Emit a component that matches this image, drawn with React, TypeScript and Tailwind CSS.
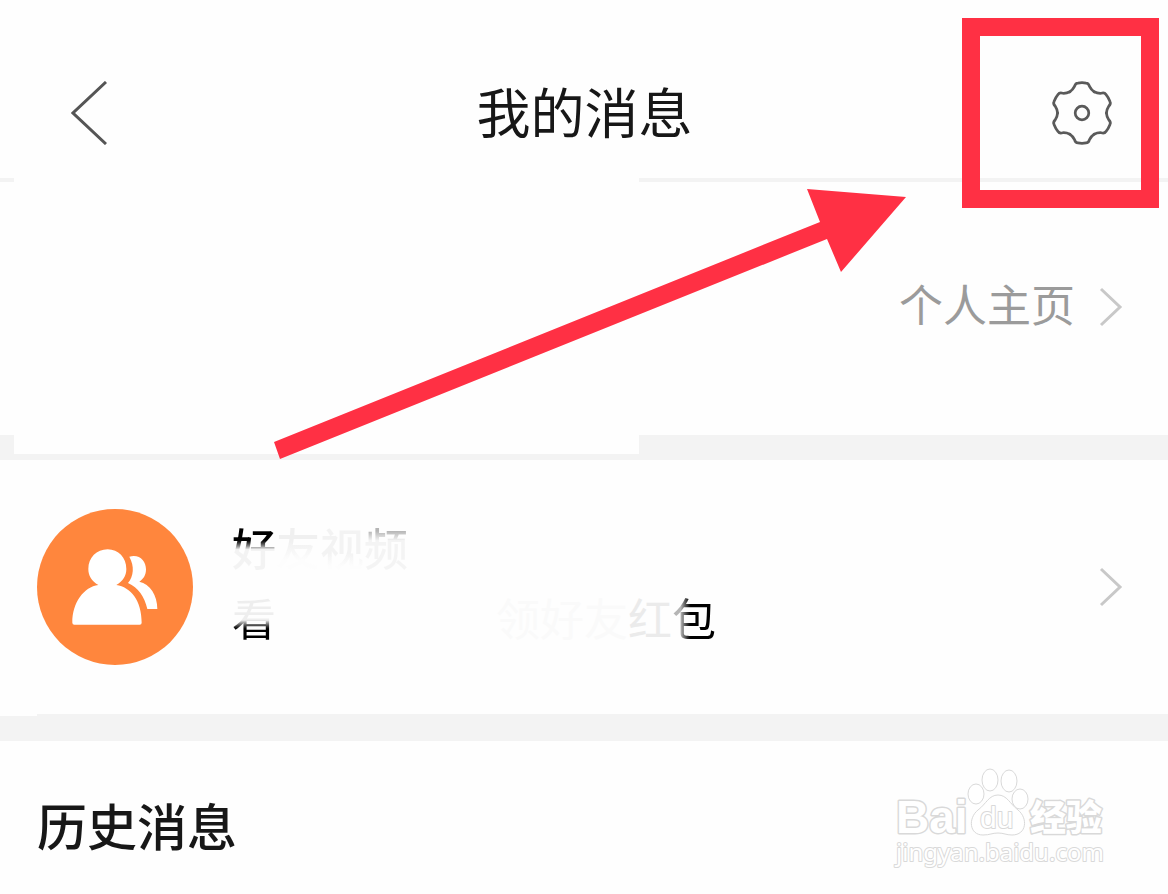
import type { ReactNode } from 'react'

const TOOTH =
  'M-36 -62 C-30 -66 -26 -70 -22 -78 C-20 -85 -18 -88 -12 -88 Q0 -90 12 -88 C18 -88 20 -85 22 -78 C26 -70 30 -66 36 -62'

function GearIcon() {
  return (
    <svg
      viewBox="-94 -94 188 188"
      className="size-16"
      fill="none"
      stroke="#5a5a5a"
      strokeWidth="8"
      strokeLinecap="round"
      strokeLinejoin="round"
      aria-hidden
    >
      {[0, 60, 120, 180, 240, 300].map((angle) => (
        <path key={angle} d={TOOTH} transform={`rotate(${angle})`} />
      ))}
      <circle r="20" />
    </svg>
  )
}

function BackIcon() {
  return (
    <svg viewBox="0 0 36 64" className="h-16 w-9" fill="none" stroke="#555" strokeWidth="3" aria-hidden>
      <path d="M35 1 L2 32 L35 63" />
    </svg>
  )
}

function ChevronIcon() {
  return (
    <svg viewBox="0 0 24 40" className="h-10 w-6" fill="none" stroke="#c8c8c8" strokeWidth="3" aria-hidden>
      <path d="M2 2 L21 20 L2 38" />
    </svg>
  )
}

function FriendsIcon() {
  return (
    <svg viewBox="51 60 468 468" className="size-[156px] shrink-0" aria-hidden>
      <circle cx="285" cy="294" r="234" fill="#ff863d" />
      <g fill="#fff">
        <path d="M235 288 C215 276 205 260 205 240 C205 206 230 181 263 181 C295 181 319 206 319 240 C319 260 309 276 289 288 C332 294 365 335 365 401 Q365 407 359 407 L163 407 Q157 407 157 401 C157 340 192 294 235 288 Z" />
        <path d="M328 203 C358 194 378 216 378 241 C378 260 369 271 358 278 C390 285 412 318 412 360 L382 360 C373 322 355 296 324 282 C341 262 344 232 328 203 Z" />
      </g>
    </svg>
  )
}

function Watermark() {
  return (
    <svg
      viewBox="0 0 260 140"
      className="pointer-events-none absolute right-[38px] bottom-1 h-[140px] w-[260px]"
      fill="#fff"
      stroke="#d9d9d9"
      strokeWidth="3"
      strokeLinejoin="round"
      aria-hidden
    >
      <text x="26" y="83" fontSize="46" fontWeight="700" className="font-['Liberation_Sans']" paintOrder="stroke">
        Bai
      </text>
      <g strokeWidth="1">
        <ellipse cx="106" cy="44" rx="8" ry="10" />
        <ellipse cx="120" cy="30" rx="8" ry="11" />
        <ellipse cx="139" cy="31" rx="8" ry="11" />
        <ellipse cx="150" cy="49" rx="8" ry="10" />
        <path d="M128 45 C119 45 116 54 108 60 C98 68 99 85 113 85 C120 85 122 83 128 83 C134 83 136 85 142 85 C157 85 158 68 148 60 C140 54 137 45 128 45 Z" />
      </g>
      <text x="110" y="78" fontSize="30" className="font-['Liberation_Sans']" strokeWidth="2" paintOrder="stroke">
        du
      </text>
      <text x="160" y="81" fontSize="36" fontWeight="900" className="font-['Noto_Sans_CJK_SC']" paintOrder="stroke">
        经验
      </text>
      <text x="26" y="111" fontSize="24" className="font-['Noto_Sans']" strokeWidth="2" paintOrder="stroke">
        jingyan.baidu.com
      </text>
    </svg>
  )
}

function Fade({ className, children }: { className: string; children: ReactNode }) {
  return <span className={`bg-clip-text text-transparent ${className}`}>{children}</span>
}

export default function App() {
  return (
    <div className="relative min-h-screen overflow-hidden bg-[#fefefe] font-['Noto_Sans_CJK_SC',sans-serif] text-[#171717]">
      <header className="relative grid grid-cols-[1fr_auto_1fr] items-center border-b-4 border-[#f3f3f3] pt-12 pr-[54px] pl-[71px]">
        <button type="button" aria-label="返回" className="justify-self-start">
          <BackIcon />
        </button>
        <h1 className="mr-4 pb-1 text-[54px] leading-[126px]">我的消息</h1>
        <button type="button" aria-label="设置" className="justify-self-end">
          <GearIcon />
        </button>
      </header>

      <main>
        <section className="relative flex h-[253px] items-center justify-end pr-[45px] pb-1">
          {/* blanked-out profile block, it runs over both dividers */}
          <div className="absolute -top-1 -bottom-[19px] left-[14px] w-[625px] bg-[#fefefe]" />
          <a href="#profile" className="flex items-center gap-6 text-[44px] leading-none text-[#9b9b9b]">
            <span className="pb-2">个人主页</span>
            <ChevronIcon />
          </a>
        </section>

        <div className="h-[25px] bg-[#f3f3f3]" />

        <a href="#friends" className="flex h-[254px] items-center gap-[39px] pr-[45px] pl-[37px]">
          <FriendsIcon />
          <div className="flex flex-1 flex-col gap-[26px] pb-2.5 text-[44px] leading-none whitespace-nowrap">
            <p className="font-medium">
              <Fade className="bg-linear-to-b from-black from-38% to-[#f3f3f3] to-54%">好</Fade>
              <Fade className="bg-linear-to-b from-[#f0f0f0] from-40% to-[#fdfdfd] to-70%">友</Fade>
              <Fade className="bg-linear-to-b from-[#f3f3f3] from-60% to-[#fdfdfd] to-80%">视</Fade>
              <Fade className="bg-linear-to-b from-[#b5b5b5] from-25% to-[#f4f4f4] to-40%">频</Fade>
            </p>
            <p>
              <Fade className="bg-linear-to-b from-[#eeeeee] from-55% to-black to-70%">看</Fade>
              <span className="text-[#fefefe]">好友拍视频</span>
              <span className="text-[#fafafa]">领好友</span>
              <span className="text-[#ebebeb]">红</span>
              <Fade className="bg-linear-to-r from-[#b5b5b5] from-20% to-black to-45%">包</Fade>
            </p>
          </div>
          <ChevronIcon />
        </a>

        <div className="h-[27px] bg-[#f3f3f3]">
          <div className="h-0.5 w-[37px] bg-[#fefefe]" />
        </div>

        <section className="px-[37px] pt-[58px] pb-8">
          <h2 className="text-[50px] leading-none font-medium">历史消息</h2>
        </section>
      </main>

      {/* pointer towards the settings button */}
      <div className="pointer-events-none absolute top-[18px] right-[9px] h-[190px] w-[197px] border-[18px] border-[#ff3044]" />
      <svg
        viewBox="0 0 640 280"
        className="pointer-events-none absolute top-[184px] right-[258px] h-[280px] w-[640px]"
        fill="#ff3044"
        aria-hidden
      >
        <path d="M4 258 L550 38 L537 5 L636 13 L571 88 L557 55 L10 275 Z" />
      </svg>

      <Watermark />
    </div>
  )
}
